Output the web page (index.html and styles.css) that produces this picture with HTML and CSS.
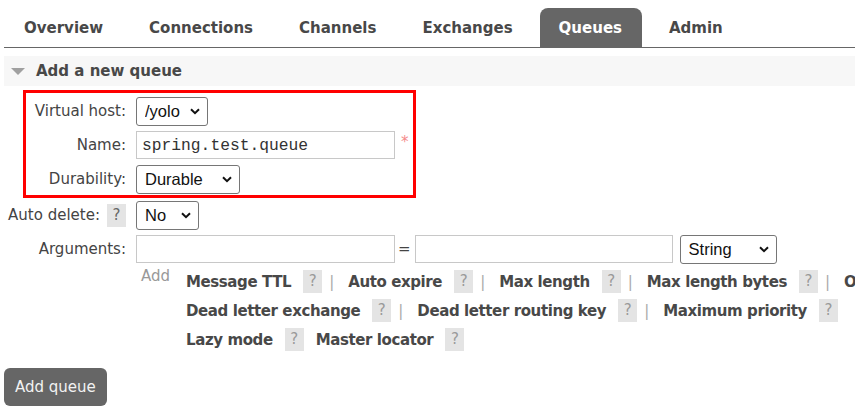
FILE: index.html
```html
<!DOCTYPE html>
<html>
<head>
<meta charset="utf-8">
<link rel="stylesheet" href="styles.css">
</head>
<body>
<div class="page">
  <ul class="tabs">
    <li class="tab">Overview</li>
    <li class="tab">Connections</li>
    <li class="tab">Channels</li>
    <li class="tab">Exchanges</li>
    <li class="tab active">Queues</li>
    <li class="tab">Admin</li>
  </ul>

  <div class="section-head">
    <span class="tri"></span>
    <span class="section-title">Add a new queue</span>
  </div>

  <form class="form">
    <div class="row">
      <label class="lbl">Virtual host:</label>
      <div class="field">
        <span class="sel w-vhost"><select><option>/yolo</option></select><svg class="chev" width="10" height="7" viewBox="0 0 10 7"><path d="M1 1.2 L5 5.2 L9 1.2" fill="none" stroke="#111" stroke-width="2"/></svg></span>
      </div>
    </div>
    <div class="row">
      <label class="lbl">Name:</label>
      <div class="field">
        <input class="txt mono" type="text" value="spring.test.queue"><span class="req">*</span>
      </div>
    </div>
    <div class="row">
      <label class="lbl">Durability:</label>
      <div class="field">
        <span class="sel w-dur"><select><option>Durable</option><option>Transient</option></select><svg class="chev" width="10" height="7" viewBox="0 0 10 7"><path d="M1 1.2 L5 5.2 L9 1.2" fill="none" stroke="#111" stroke-width="2"/></svg></span>
      </div>
    </div>
    <div class="row row-auto">
      <label class="lbl">Auto delete:<span class="help">?</span></label>
      <div class="field">
        <span class="sel w-no"><select><option>No</option><option>Yes</option></select><svg class="chev" width="10" height="7" viewBox="0 0 10 7"><path d="M1 1.2 L5 5.2 L9 1.2" fill="none" stroke="#111" stroke-width="2"/></svg></span>
      </div>
    </div>
    <div class="row">
      <label class="lbl">Arguments:</label>
      <div class="field args">
        <input class="txt arg" type="text"><span class="eq">=</span><input class="txt arg" type="text"><span class="sel w-str"><select><option>String</option><option>Number</option><option>List</option></select><svg class="chev" width="10" height="7" viewBox="0 0 10 7"><path d="M1 1.2 L5 5.2 L9 1.2" fill="none" stroke="#111" stroke-width="2"/></svg></span>
      </div>
    </div>
    <div class="extra">
      <span class="add">Add</span>
      <div class="links">
        <div class="line"><span class="lk">Message TTL</span><span class="help">?</span><span class="sep">|</span><span class="lk">Auto expire</span><span class="help">?</span><span class="sep">|</span><span class="lk">Max length</span><span class="help">?</span><span class="sep">|</span><span class="lk">Max length bytes</span><span class="help">?</span><span class="sep">|</span><span class="lk">Overflow behaviour</span><span class="help">?</span></div>
        <div class="line"><span class="lk">Dead letter exchange</span><span class="help">?</span><span class="sep">|</span><span class="lk">Dead letter routing key</span><span class="help">?</span><span class="sep">|</span><span class="lk">Maximum priority</span><span class="help">?</span></div>
        <div class="line"><span class="lk">Lazy mode</span><span class="help">?</span><span class="lk">Master locator</span><span class="help">?</span></div>
      </div>
    </div>
    <button class="btn" type="button">Add queue</button>
    <div class="mark"></div>
  </form>
</div>
</body>
</html>
```

FILE: styles.css
```css
html, body {
  margin: 0;
  padding: 0;
  background: #fff;
  overflow: hidden;
}
body {
  font-family: "DejaVu Sans", Verdana, sans-serif;
  font-size: 15px;
  color: #444;
  width: 855px;
  height: 418px;
}
.page {
  padding-left: 4px;
  width: 1100px;
}
.tabs {
  list-style: none;
  margin: 8px 0 0 0;
  padding: 0 0 0 1px;
  display: flex;
  height: 39px;
  border-bottom: 1px solid #666;
  width: 851px;
}
.tab {
  padding: 0 19px;
  margin-right: 8px;
  line-height: 40px;
  font-weight: bold;
  color: #484848;
  border-radius: 8px 8px 0 0;
}
.tab.active {
  background: #666;
  color: #fff;
  padding: 0 20px 0 19px;
}
.section-head {
  margin-top: 8px;
  height: 30px;
  background: #f7f7f7;
  display: flex;
  align-items: center;
  padding-left: 7px;
  width: 844px;
}
.tri {
  width: 0;
  height: 0;
  border-left: 7px solid transparent;
  border-right: 7px solid transparent;
  border-top: 7px solid #a0a0a0;
  margin-right: 11px;
}
.section-title {
  font-weight: bold;
  color: #484848;
}
.form {
  position: relative;
  padding-top: 8px;
  margin: 0;
}
.row {
  display: grid;
  grid-template-columns: 122px auto;
  column-gap: 10px;
  align-items: center;
  height: 34px;
}
.row-auto {
  margin-top: 2px;
}
.lbl {
  text-align: right;
  color: #444;
  white-space: nowrap;
  display: flex;
  justify-content: flex-end;
  align-items: center;
}
.field {
  display: flex;
  align-items: center;
}
.sel {
  position: relative;
  display: inline-block;
  height: 29px;
}
.sel select {
  appearance: none;
  -webkit-appearance: none;
  width: 100%;
  height: 29px;
  border: 1px solid #767676;
  border-radius: 3px;
  background: #fff;
  font-family: "Liberation Sans", Arial, sans-serif;
  font-size: 16.5px;
  color: #111;
  padding: 0 0 0 8px;
  margin: 0;
  outline: none;
}
.chev {
  position: absolute;
  right: 8px;
  top: 11px;
  pointer-events: none;
}
.w-vhost { width: 72px; }
.w-dur { width: 104px; }
.w-no { width: 63px; }
.w-str { width: 97px; }
.txt {
  box-sizing: border-box;
  height: 28px;
  width: 259px;
  border: 1px solid #c8c8c8;
  margin: 0;
  padding: 0 5px;
  background: #fff;
  outline: none;
  font-family: "Liberation Sans", Arial, sans-serif;
  font-size: 16px;
}
.mono {
  font-family: "Liberation Mono", "Courier New", monospace;
  font-size: 16.3px;
  color: #333;
}
.req {
  color: #f58a8a;
  margin-left: 6px;
  align-self: flex-start;
  margin-top: 2px;
  font-size: 15px;
}
.eq {
  margin: 0 4px 0 3px;
  color: #444;
}
.arg + .eq + .arg {
  width: 258px;
  margin-right: 7px;
}
.help {
  display: inline-block;
  width: 19px;
  height: 23px;
  line-height: 23px;
  text-align: center;
  background: #e4e4e4;
  color: #999;
  font-weight: normal;
  margin-left: 12px;
  letter-spacing: 0;
}
.lbl .help {
  margin-left: 7px;
  color: #666;
}
.extra {
  display: flex;
  margin-left: 132px;
  margin-top: 1px;
}
.add {
  width: 50px;
  padding-left: 5px;
  box-sizing: border-box;
  color: #999;
  line-height: 19px;
  flex: none;
}
.links {
  white-space: nowrap;
}
.line {
  height: 29px;
  display: flex;
  align-items: center;
}
.lk {
  font-weight: bold;
  color: #484848;
  letter-spacing: -0.4px;
}
.help + .lk {
  margin-left: 12px;
}
.sep {
  color: #aaa;
  margin: 0 14px 0 7px;
}
.btn {
  margin-top: 14px;
  height: 38px;
  padding: 0 11px;
  background: #666;
  color: #f2f2f2;
  border: none;
  border-radius: 6px;
  font-family: "DejaVu Sans", Verdana, sans-serif;
  font-size: 15px;
  display: block;
}
.mark {
  position: absolute;
  left: 19px;
  top: 4px;
  width: 387px;
  height: 102px;
  border: 3px solid #f00;
  pointer-events: none;
}
```
